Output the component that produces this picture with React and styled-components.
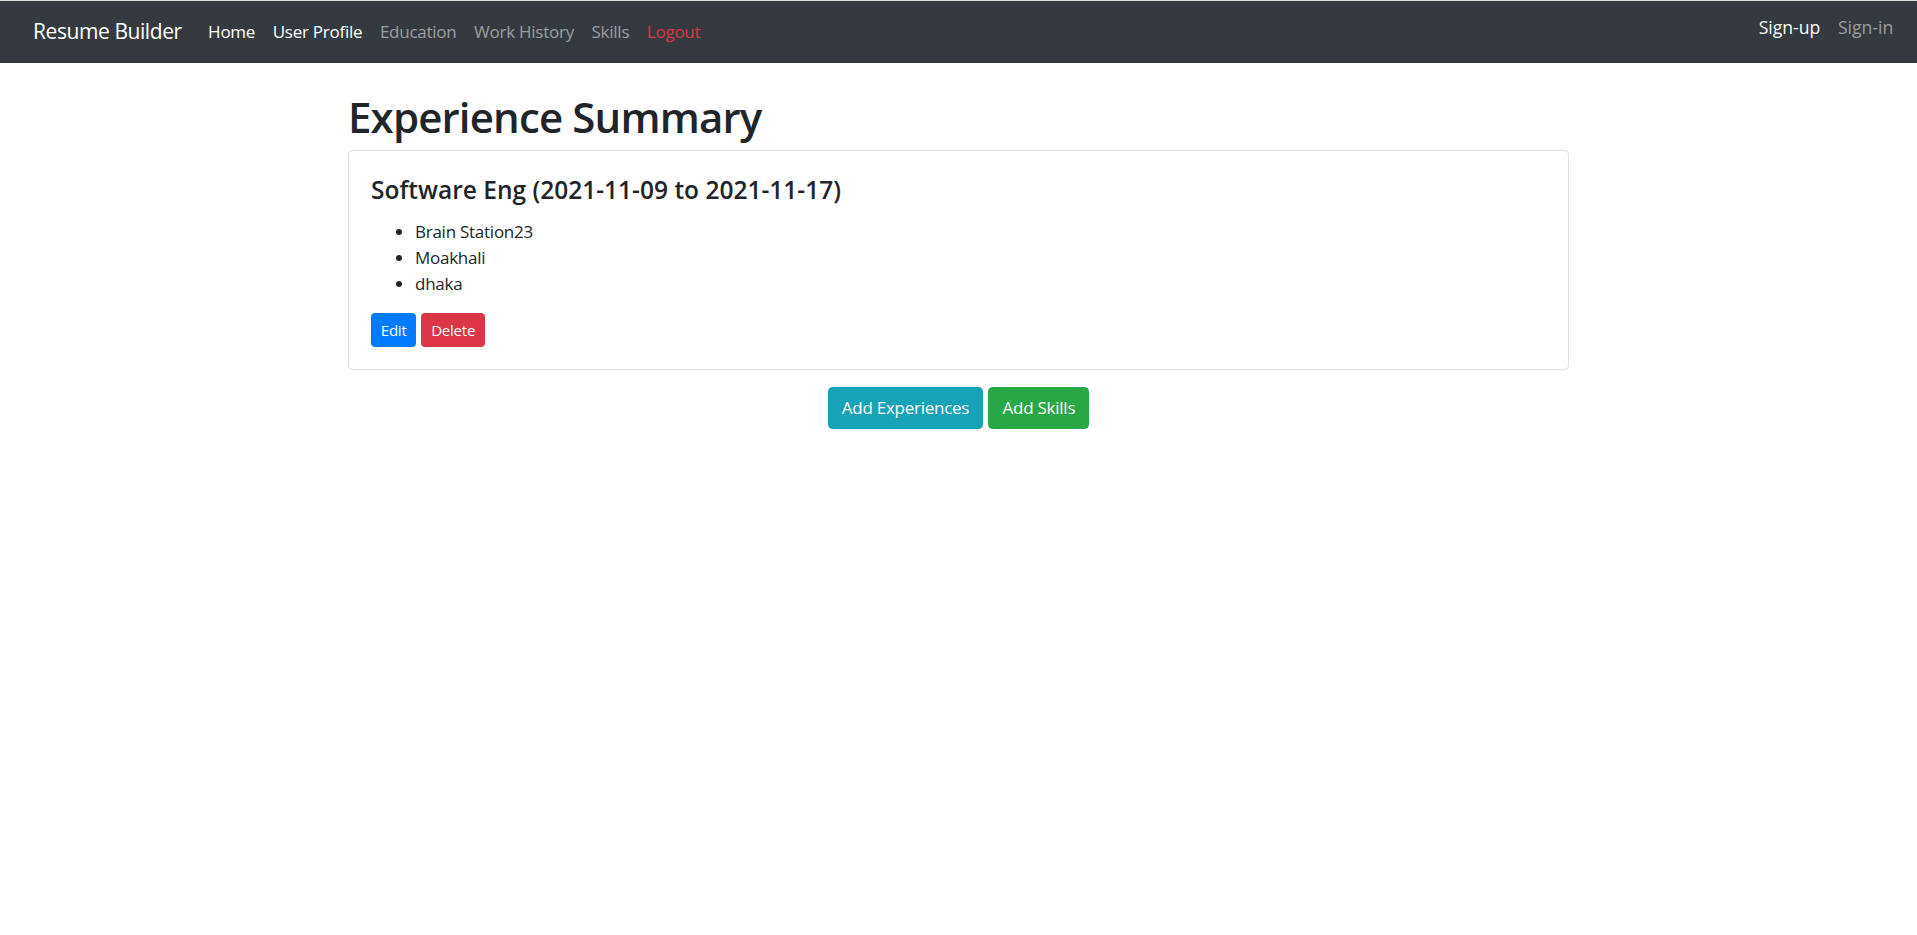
import React from 'react';
import styled, { createGlobalStyle } from 'styled-components';

const GlobalStyle = createGlobalStyle`
  *, *::before, *::after {
    box-sizing: border-box;
  }

  body {
    margin: 0;
    background: #fff;
    color: #212529;
    font-family: "Open Sans", "Noto Sans", sans-serif;
    font-size: 17px;
    letter-spacing: -0.015em;
    line-height: 1.5;
  }
`;

const leftLinks = [
  { label: 'Home', tone: 'active' },
  { label: 'User Profile', tone: 'active' },
  { label: 'Education', tone: 'muted' },
  { label: 'Work History', tone: 'muted' },
  { label: 'Skills', tone: 'muted' },
  { label: 'Logout', tone: 'danger' },
];

const rightLinks = [
  { label: 'Sign-up', tone: 'active' },
  { label: 'Sign-in', tone: 'muted' },
];

const experience = {
  title: 'Software Eng',
  from: '2021-11-09',
  to: '2021-11-17',
  details: ['Brain Station23', 'Moakhali', 'dhaka'],
};

const App = () => {
  return (
    <>
      <GlobalStyle />
      <Navbar>
        <Brand href="#">Resume Builder</Brand>
        <NavList>
          {leftLinks.map((link) => (
            <NavLink key={link.label} href="#" $tone={link.tone}>
              {link.label}
            </NavLink>
          ))}
        </NavList>
        <NavList $right>
          {rightLinks.map((link) => (
            <NavLink key={link.label} href="#" $tone={link.tone}>
              {link.label}
            </NavLink>
          ))}
        </NavList>
      </Navbar>

      <Container>
        <PageTitle>Experience Summary</PageTitle>
        <Card>
          <CardTitle>
            {experience.title} ({experience.from} to {experience.to})
          </CardTitle>
          <DetailList>
            {experience.details.map((item) => (
              <li key={item}>{item}</li>
            ))}
          </DetailList>
          <ButtonRow>
            <Button $variant="primary" $small>
              Edit
            </Button>
            <Button $variant="danger" $small>
              Delete
            </Button>
          </ButtonRow>
        </Card>
        <Actions>
          <Button $variant="info">Add Experiences</Button>
          <Button $variant="success">Add Skills</Button>
        </Actions>
      </Container>
    </>
  );
};

export default App;

const toneColors = {
  active: '#fff',
  muted: 'rgba(255, 255, 255, 0.5)',
  danger: '#dc3545',
};

const variants = {
  primary: '#007bff',
  danger: '#dc3545',
  info: '#17a2b8',
  success: '#28a745',
};

const Navbar = styled.nav`
  display: flex;
  align-items: center;
  height: 63px;
  padding: 0 15px 0 33px;
  background: #343a40;
  border-top: 1px solid #d9d9d9;
`;

const Brand = styled.a`
  margin-right: 17.6px;
  color: #fff;
  font-size: 21px;
  letter-spacing: -0.02em;
  line-height: 1.5;
  text-decoration: none;
  white-space: nowrap;
`;

const NavList = styled.div`
  display: flex;
  align-items: center;
  margin-left: ${({ $right }) => ($right ? 'auto' : '0')};
  margin-bottom: ${({ $right }) => ($right ? '9px' : '0')};
  font-size: ${({ $right }) => ($right ? '17.6px' : '17px')};
  letter-spacing: ${({ $right }) => ($right ? '0' : '-0.015em')};
`;

const NavLink = styled.a`
  padding: 8.8px;
  color: ${({ $tone }) => toneColors[$tone]};
  text-decoration: none;
  white-space: nowrap;
`;

const Container = styled.main`
  max-width: 1221px;
  margin: 29px auto 0;
`;

const PageTitle = styled.h1`
  margin: 0 0 8px;
  font-size: 42px;
  font-weight: 600;
  letter-spacing: -0.02em;
  line-height: 1.2;
`;

const Card = styled.section`
  padding: 22px;
  border: 1px solid rgba(0, 0, 0, 0.125);
  border-radius: 4.4px;
`;

const CardTitle = styled.h5`
  margin: 2px 0 14px;
  font-size: 24.5px;
  font-weight: 600;
  letter-spacing: 0;
  line-height: 1.2;
`;

const DetailList = styled.ul`
  margin: 0 0 16px;
  padding-left: 44px;
  line-height: 26.2px;
`;

const ButtonRow = styled.div`
  display: flex;
  gap: 5px;
`;

const Button = styled.button`
  padding: ${({ $small }) => ($small ? '4.4px 8.8px' : '6.6px 13.2px')};
  border: 1px solid ${({ $variant }) => variants[$variant]};
  border-radius: ${({ $small }) => ($small ? '3.5px' : '4.4px')};
  background: ${({ $variant }) => variants[$variant]};
  color: #fff;
  font-family: inherit;
  font-size: ${({ $small }) => ($small ? '15px' : '17px')};
  letter-spacing: -0.015em;
  line-height: ${({ $small }) => ($small ? '23.1px' : '26.4px')};
  cursor: pointer;
`;

const Actions = styled.div`
  display: flex;
  justify-content: center;
  gap: 5px;
  margin-top: 17px;
`;
